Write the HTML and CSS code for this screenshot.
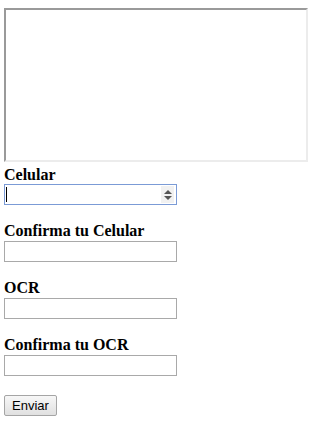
FILE: index.html
```html
<!DOCTYPE html>
<html lang="es">
<head>
    <meta charset="UTF-8">
    <meta name="viewport" content="width=device-width, initial-scale=1.0">
    <title>Registro</title>
    <link rel="stylesheet" href="styles.css">
</head>
<body>
    <div class="page">
        <div class="frame"></div>
        <form class="form">
            <div class="field">
                <label for="celular">Celular</label>
                <div class="input-wrap">
                    <input type="text" id="celular" class="focused">
                    <span class="caret"></span>
                    <span class="spinner">
                        <svg width="8" height="10" viewBox="0 0 8 10"><path d="M4 0L8 4H0Z M0 6H8L4 10Z" fill="#555"/></svg>
                    </span>
                </div>
            </div>
            <div class="field">
                <label for="celular2">Confirma tu Celular</label>
                <input type="text" id="celular2">
            </div>
            <div class="field">
                <label for="ocr">OCR</label>
                <input type="text" id="ocr">
            </div>
            <div class="field">
                <label for="ocr2">Confirma tu OCR</label>
                <input type="text" id="ocr2">
            </div>
            <button type="button">Enviar</button>
        </form>
    </div>
</body>
</html>
```

FILE: styles.css
```css
body {
    margin: 0;
    padding: 0;
    background-color: #ffffff;
    font-family: "Liberation Serif", "Times New Roman", serif;
    color: #000000;
}
.page {
    display: flex;
    flex-direction: column;
    align-items: flex-start;
    padding: 8px 4px;
}
.frame {
    width: 300px;
    height: 150px;
    border: 2px solid;
    border-color: #9a9a9a #ececec #ececec #9a9a9a;
    margin-bottom: 4px;
}
.form {
    display: flex;
    flex-direction: column;
    align-items: flex-start;
}
.field {
    display: flex;
    flex-direction: column;
    align-items: flex-start;
    margin-bottom: 17px;
}
.field label {
    font-weight: bold;
    font-size: 16px;
    line-height: 18px;
    margin-bottom: 0;
}
.field:not(:first-child) label {
    margin-bottom: 1px;
}
input {
    box-sizing: border-box;
    width: 173px;
    height: 21px;
    margin: 0;
    border: 1px solid #a9a9a9;
    padding: 1px 2px;
    outline: none;
    background: #ffffff;
}
input.focused {
    border-color: #7b9bd6;
}
.input-wrap {
    position: relative;
}
.caret {
    position: absolute;
    left: 2px;
    top: 3px;
    width: 1px;
    height: 15px;
    background: #000000;
}
.spinner {
    position: absolute;
    right: 3px;
    top: 2px;
    width: 13px;
    height: 17px;
    background: #f1f1f1;
    display: flex;
    align-items: center;
    justify-content: center;
}
.spinner svg {
    display: block;
}
button {
    margin-top: 2px;
    height: 21px;
    padding: 0 7px;
    font-family: "Liberation Sans", Arial, sans-serif;
    font-size: 13px;
    color: #000000;
    border: 1px solid #a5a5a5;
    border-radius: 2px;
    background: linear-gradient(#f7f7f7, #e0e0e0);
}
```
